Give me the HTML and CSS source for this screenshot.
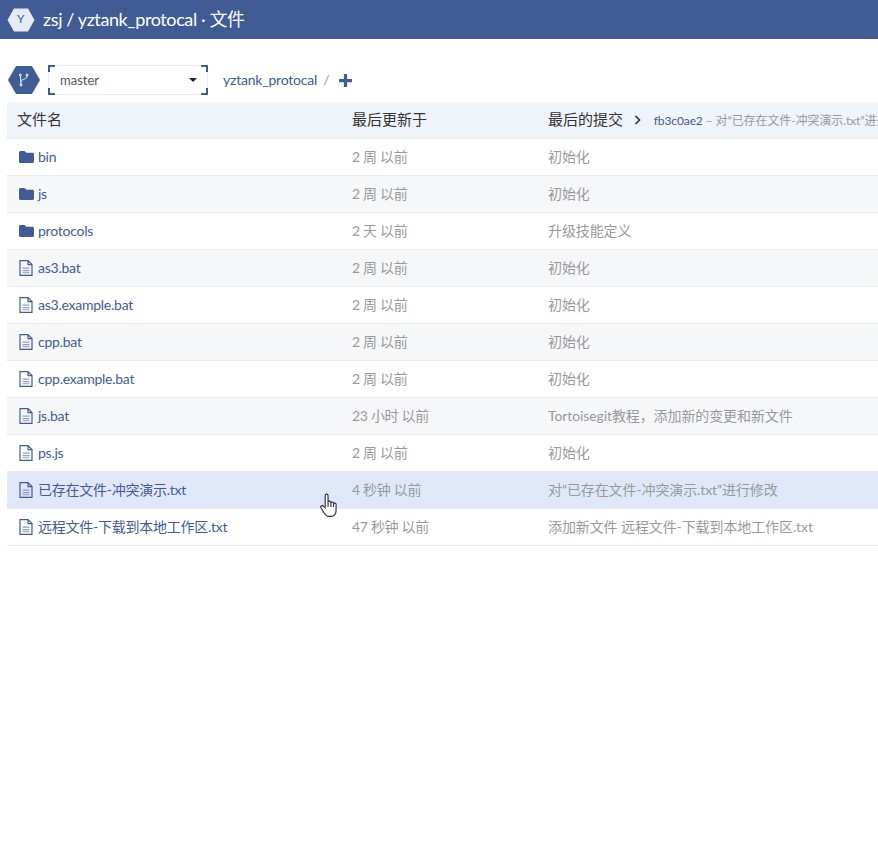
FILE: index.html
```html
<!DOCTYPE html>
<html lang="zh">
<head>
    <meta charset="UTF-8">
    <title>zsj / yztank_protocal · 文件</title>
    <link rel="stylesheet" href="styles.css">
</head>
<body>
    <svg width="0" height="0" class="defs">
        <symbol id="folder" viewBox="0 0 15 12"><path d="M1.500 0h3.500c.6 0 1 .2 1.300.6l1 1.200h6.200c.8 0 1.500.7 1.500 1.500v7.200c0 .8-.7 1.500-1.500 1.500h-12C.7 12 0 11.300 0 10.500v-9C0 .7.700 0 1.500 0z"/></symbol>
        <symbol id="file" viewBox="0 0 14 16"><path class="file-line" d="M1 .6h8l4 4v10.800H1z M9 .6v4h4"/><path class="file-mark" d="M3.500 7.500h7v1.300h-7z M3.500 10h7v1.300h-7z M3.500 12.300h7v1h-7z"/></symbol>
    </svg>

    <header class="topbar">
        <svg class="hex-small" viewBox="0 0 28 24"><path d="M7 .5h14l6.500 11.500L21 23.500H7L.5 12z"/></svg>
        <span class="hex-letter">Y</span>
        <h1>zsj / yztank_protocal · 文件</h1>
    </header>

    <div class="toolbar">
        <svg class="hex-branch" viewBox="0 0 32 28">
            <path class="hex-fill" d="M8 0h16l8 14-8 14H8L0 14z"/>
            <path class="hex-git" d="M12.500 10l.5 8M19 10c.2 3.500-4.800 2.500-5.700 5.500"/>
            <circle class="hex-git" cx="12.300" cy="9" r="1"/>
            <circle class="hex-git" cx="19" cy="9" r="1"/>
            <circle class="hex-git" cx="13" cy="19" r="1"/>
        </svg>
        <div class="branch-select">
            <span>master</span>
            <i class="caret"></i>
            <i class="corner tl"></i><i class="corner tr"></i><i class="corner bl"></i><i class="corner br"></i>
        </div>
        <a class="crumb">yztank_protocal</a>
        <span class="crumb-sep">/</span>
        <svg class="plus" viewBox="0 0 12 12"><path d="M4.500 0h3v4.500H12v3H7.500V12h-3V7.500H0v-3h4.500z"/></svg>
    </div>

    <div class="file-table">
        <div class="row head">
            <div class="name">文件名</div>
            <div class="age">最后更新于</div>
            <div class="msg">最后的提交
                <svg class="chev" viewBox="0 0 7 10"><path d="M1.500 1l4 4-4 4"/></svg>
                <span class="commit"><a>fb3c0ae2</a> – 对“已存在文件-冲突演示.txt”进行修改</span>
            </div>
        </div>
        <div class="row"><div class="name"><svg class="ico-folder"><use href="#folder"/></svg><a>bin</a></div><div class="age">2 周 以前</div><div class="msg">初始化</div></div>
        <div class="row"><div class="name"><svg class="ico-folder"><use href="#folder"/></svg><a>js</a></div><div class="age">2 周 以前</div><div class="msg">初始化</div></div>
        <div class="row"><div class="name"><svg class="ico-folder"><use href="#folder"/></svg><a>protocols</a></div><div class="age">2 天 以前</div><div class="msg">升级技能定义</div></div>
        <div class="row"><div class="name"><svg class="ico-file"><use href="#file"/></svg><a>as3.bat</a></div><div class="age">2 周 以前</div><div class="msg">初始化</div></div>
        <div class="row"><div class="name"><svg class="ico-file"><use href="#file"/></svg><a>as3.example.bat</a></div><div class="age">2 周 以前</div><div class="msg">初始化</div></div>
        <div class="row"><div class="name"><svg class="ico-file"><use href="#file"/></svg><a>cpp.bat</a></div><div class="age">2 周 以前</div><div class="msg">初始化</div></div>
        <div class="row"><div class="name"><svg class="ico-file"><use href="#file"/></svg><a>cpp.example.bat</a></div><div class="age">2 周 以前</div><div class="msg">初始化</div></div>
        <div class="row"><div class="name"><svg class="ico-file"><use href="#file"/></svg><a>js.bat</a></div><div class="age">23 小时 以前</div><div class="msg">Tortoisegit教程，添加新的变更和新文件</div></div>
        <div class="row"><div class="name"><svg class="ico-file"><use href="#file"/></svg><a>ps.js</a></div><div class="age">2 周 以前</div><div class="msg">初始化</div></div>
        <div class="row hover"><div class="name"><svg class="ico-file"><use href="#file"/></svg><a>已存在文件-冲突演示.txt</a></div><div class="age">4 秒钟 以前</div><div class="msg">对“已存在文件-冲突演示.txt”进行修改</div>
            <svg class="cursor" viewBox="0 0 18 26"><path d="M5.500 16V3c0-2 3-2 3 0v7c0-1.500 3-1.500 3 0v1c0-1.500 2.800-1.500 2.800 0v1c0-1.500 2.700-1.200 2.700.3V19c0 3-2 6-5 6H9c-2.500 0-3.500-1.500-5-4L1 16c-1-2 1.500-3 2.800-1.500z"/><path d="M8.500 10v5M11.500 11v4M14.300 12v3"/></svg>
        </div>
        <div class="row"><div class="name"><svg class="ico-file"><use href="#file"/></svg><a>远程文件-下载到本地工作区.txt</a></div><div class="age">47 秒钟 以前</div><div class="msg">添加新文件 远程文件-下载到本地工作区.txt</div></div>
    </div>
</body>
</html>
```

FILE: styles.css
```css
body {
    margin: 0;
    font-family: Lato, "Noto Sans CJK SC", sans-serif;
    font-size: 14px;
    background-color: #ffffff;
    overflow-x: hidden;
}
a {
    color: #3f5b94;
}
.defs {
    display: block;
    height: 0;
}
.topbar {
    position: relative;
    display: flex;
    align-items: center;
    height: 39px;
    padding-left: 7px;
    background-color: #415b94;
}
.topbar h1 {
    margin: 0 0 0 8px;
    padding-bottom: 4px;
    font-size: 18px;
    font-weight: 400;
    letter-spacing: -0.4px;
    color: #ffffff;
    white-space: nowrap;
}
.hex-small {
    width: 28px;
    height: 24px;
    fill: #e6eaf5;
}
.hex-letter {
    position: absolute;
    left: 17px;
    top: 10px;
    font-size: 12px;
    line-height: 18px;
    color: #415b94;
}
.toolbar {
    display: flex;
    align-items: center;
    height: 30px;
    margin-top: 26px;
    padding-left: 8px;
}
.hex-branch {
    width: 32px;
    height: 28px;
}
.hex-fill {
    fill: #415b94;
}
.hex-git {
    fill: none;
    stroke: #ffffff;
    stroke-width: 1;
}
.branch-select {
    position: relative;
    display: flex;
    align-items: center;
    box-sizing: border-box;
    width: 160px;
    height: 30px;
    margin-left: 8px;
    padding-left: 11px;
    border: 1px solid #eeeeee;
    font-size: 13px;
    color: #555555;
}
.caret {
    position: absolute;
    right: 10px;
    top: 12px;
    border-left: 4px solid transparent;
    border-right: 4px solid transparent;
    border-top: 4px solid #222222;
}
.corner {
    position: absolute;
    width: 5px;
    height: 5px;
    border: 0 solid #415b94;
}
.tl { left: -1px; top: -1px; border-width: 2px 0 0 2px; }
.tr { right: -1px; top: -1px; border-width: 2px 2px 0 0; }
.bl { left: -1px; bottom: -1px; border-width: 0 0 2px 2px; }
.br { right: -1px; bottom: -1px; border-width: 0 2px 2px 0; }
.crumb {
    margin-left: 15px;
    padding-bottom: 2px;
    letter-spacing: -0.2px;
    white-space: nowrap;
}
.crumb-sep {
    margin-left: 6px;
    padding-bottom: 2px;
    color: #999999;
}
.plus {
    width: 13px;
    height: 13px;
    margin-left: 9px;
    fill: #415b94;
}
.file-table {
    margin-top: 7px;
    margin-left: 7px;
}
.row {
    position: relative;
    display: grid;
    grid-template-columns: 345px 196px 1fr;
    align-items: center;
    height: 36px;
    border-bottom: 1px solid #e8eaee;
    white-space: nowrap;
    overflow: hidden;
    color: #999999;
}
.row:nth-child(odd) {
    background-color: #f6f7f9;
}
.row.head {
    background-color: #eff3fa;
    color: #333333;
    font-size: 15px;
}
.row.hover {
    background-color: #e0e7f8;
    overflow: visible;
}
.name {
    display: flex;
    align-items: center;
    padding-left: 12px;
}
.name a {
    margin-left: 4px;
    padding-bottom: 2px;
    letter-spacing: -0.25px;
}
.age {
    padding-bottom: 2px;
    letter-spacing: -0.3px;
}
.msg {
    padding-bottom: 2px;
    letter-spacing: -0.1px;
}
.head .name {
    padding-left: 10px;
    padding-bottom: 4px;
}
.head .age {
    padding-bottom: 4px;
    letter-spacing: 0;
}
.head .msg {
    padding-bottom: 4px;
    letter-spacing: 0;
}
.ico-folder {
    width: 15px;
    height: 12px;
    fill: #415b94;
}
.ico-file {
    width: 14px;
    height: 16px;
    margin-right: 1px;
    fill: none;
}
.file-line {
    fill: none;
    stroke: #415b94;
    stroke-width: 1.2;
}
.file-mark {
    fill: #8f9fc0;
}
.chev {
    width: 7px;
    height: 10px;
    margin: 0 9px 0 7px;
    fill: none;
    stroke: #333333;
    stroke-width: 1.6;
}
.commit {
    font-size: 12px;
    letter-spacing: -0.1px;
    color: #999999;
}
.cursor {
    position: absolute;
    left: 313px;
    top: 20px;
    width: 17px;
    height: 26px;
    fill: #ffffff;
    stroke: #2b2b3a;
    stroke-width: 1.200;
    z-index: 2;
}
```
